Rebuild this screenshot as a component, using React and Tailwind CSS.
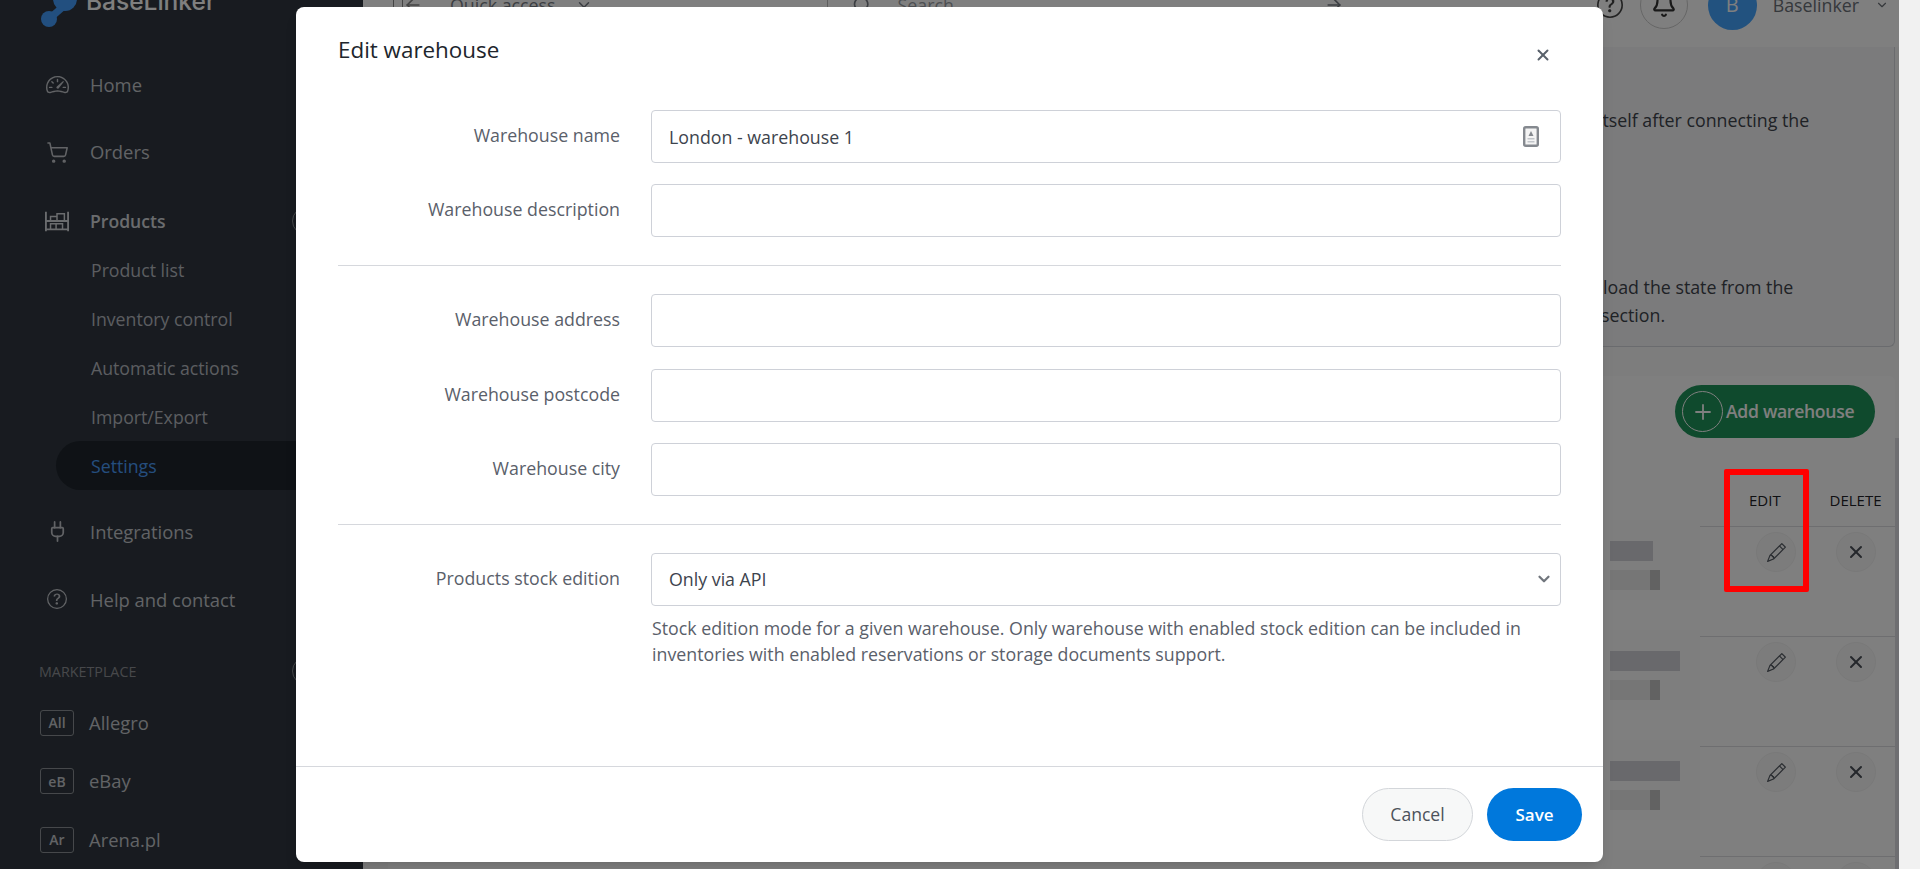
import { Bell, ChevronDown, Search, ArrowRight, ArrowLeft, X, Plus, ShoppingCart, Plug } from 'lucide-react';
import { BsSpeedometer2, BsQuestionCircle, BsPencil } from 'react-icons/bs';

function ShelfIcon() {
  return (
    <svg width="26" height="21" viewBox="0 0 26 21" fill="none" stroke="currentColor" strokeWidth="2">
      <path d="M1 0v21M25 0v21M1 10h24M1 19h24" />
      <path d="M6 10V5h7v5M13 7V2h8v8M6 19v-6h6v6M12 19v-6h7v6" strokeWidth="1.6" />
    </svg>
  );
}

function ContactIcon() {
  return (
    <svg width="16" height="21" viewBox="0 0 16 21">
      <rect x="1.2" y="1.2" width="13.6" height="18.6" rx="1.5" fill="#f4f4f4" stroke="#85898f" strokeWidth="2.4" />
      <path d="M8 5l2.5 5h-5z" fill="#85898f" />
      <rect x="4.5" y="12" width="7" height="1.5" fill="#c2c5ca" />
      <rect x="4.5" y="15" width="7" height="1.5" fill="#c2c5ca" />
    </svg>
  );
}

function MainItem({ icon, label }) {
  return (
    <div className="flex items-center h-[68px] pl-[45px] text-[18.4px] text-[#c4c7cc]">
      <span className="w-[24px] flex justify-center shrink-0">{icon}</span>
      <span className="ml-[21px]">{label}</span>
    </div>
  );
}

function MarketItem({ tag, label }) {
  return (
    <div className="flex items-center h-[58.5px] pl-[40px] text-[18.4px] text-[#c4c7cc]">
      <span className="w-[34px] h-[26px] border border-[#8d9196] rounded-[3px] flex items-center justify-center text-[14px] font-semibold shrink-0">{tag}</span>
      <span className="ml-[15px]">{label}</span>
    </div>
  );
}

function Sidebar() {
  const subItems = ['Product list', 'Inventory control', 'Automatic actions', 'Import/Export'];
  return (
    <aside className="w-[363px] shrink-0 bg-[#303740] flex flex-col">
      <div className="h-[51px] pl-[41px] flex items-start">
        <div className="h-[13px] flex items-end gap-[9px]">
          <svg width="36" height="40" viewBox="0 0 36 40" className="shrink-0 -mb-[14px]">
            <path d="M8 32L24 18" stroke="#449fff" strokeWidth="7" />
            <circle cx="8" cy="32" r="8" fill="#449fff" />
            <circle cx="24" cy="12" r="12" fill="#449fff" />
          </svg>
          <span className="text-[24.5px] leading-none font-medium text-white font-['Inter',sans-serif]">BaseLinker</span>
        </div>
      </div>
      <MainItem icon={<BsSpeedometer2 size={23} />} label="Home" />
      <MainItem icon={<ShoppingCart size={23} strokeWidth={1.6} />} label="Orders" />
      <div className="mt-[11px] h-[49px] flex items-center pl-[45px] text-[17.6px] font-semibold text-[#d5d8dc]">
        <span className="w-[24px] flex justify-center shrink-0"><ShelfIcon /></span>
        <span className="ml-[21px]">Products</span>
        <span className="ml-auto mr-[43px] w-[28px] h-[28px] rounded-full border border-[#8d9196]" />
      </div>
      <div className="flex flex-col">
        {subItems.map((item) => (
          <div key={item} className="h-[49px] flex items-center pl-[91px] text-[17.7px] text-[#b8bbc0]">{item}</div>
        ))}
        <div className="h-[49px] ml-[56px] pl-[35px] flex items-center text-[17.7px] text-[#4a9dfb] bg-[#1e242c] rounded-l-full">Settings</div>
      </div>
      <div className="mt-[7px]">
        <MainItem icon={<Plug size={23} strokeWidth={1.8} />} label="Integrations" />
        <MainItem icon={<BsQuestionCircle size={20} />} label="Help and contact" />
      </div>
      <div className="mt-[28px] h-[20px] pl-[39px] flex items-center text-[14.3px] text-[#8e9196]">
        MARKETPLACE
        <span className="ml-auto mr-[43px] w-[28px] h-[28px] rounded-full border border-[#8d9196]" />
      </div>
      <div className="mt-[12px]">
        <MarketItem tag="All" label="Allegro" />
        <MarketItem tag="eB" label="eBay" />
        <MarketItem tag="Ar" label="Arena.pl" />
      </div>
    </aside>
  );
}

function TopBar() {
  return (
    <div className="h-[47px] bg-[#ffffff] shrink-0">
      <div className="h-[10px] flex items-center text-[17.8px] text-[#777c84]">
        <span className="ml-[30px] w-[33px] flex items-center shrink-0 text-[#888]">
          <span className="w-[10px] h-[24px] border border-[#888] rounded-[2px] shrink-0" />
          <ArrowLeft size={20} />
        </span>
        <span className="ml-[24px]">Quick access</span>
        <ChevronDown className="ml-[19px] shrink-0" size={18} />
        <span className="ml-[234px] w-px h-[30px] bg-[#bbb] shrink-0" />
        <Search className="ml-[24px] shrink-0" size={20} />
        <span className="ml-[26px] text-[#9a9ea5]">Search</span>
        <ArrowRight className="ml-[370px] shrink-0" size={20} />
        <div className="ml-auto flex items-center">
          <BsQuestionCircle size={26} className="text-[#444]" />
          <span className="ml-[17px] w-[48px] h-[48px] shrink-0 rounded-full border border-[#ccc] flex items-center justify-center">
            <Bell size={26} className="text-[#333]" />
          </span>
          <span className="ml-[20px] w-[49px] h-[49px] shrink-0 rounded-full bg-[#44a4ff] text-white text-[20px] flex items-center justify-center">B</span>
          <span className="ml-[16px] text-[#6c7178]">Baselinker</span>
          <ChevronDown className="ml-[16px] mr-[10px] text-[#6c7178]" size={14} />
        </div>
      </div>
    </div>
  );
}

function InfoCard() {
  return (
    <div className="h-[300px] shrink-0 mr-[4px] ml-[25px] bg-[#f6f7f9] border border-[#d5d7dc] border-t-0 rounded-b-[6px] text-[17.8px] text-[#3f444c] whitespace-nowrap">
      <div className="mt-[60px] leading-[26px] ml-[1209px]">itself after connecting the</div>
      <div className="mt-[140px] leading-[28px] ml-[1214px]">load the state from the</div>
      <div className="leading-[28px] ml-[1212px]">section.</div>
    </div>
  );
}

function Mosaic({ w }) {
  return (
    <div className="h-[80px] w-[97px] mt-[-7px] bg-[#fcfcfc] flex flex-col pl-[7px]">
      <div className={`mt-[21px] h-[20px] bg-[#d2d3d8] ${w}`} />
      <div className="mt-[9px] w-[50px] h-[20px] bg-[#ececec] flex justify-end">
        <span className="w-[10px] h-[20px] bg-[#c4c4c4]" />
      </div>
    </div>
  );
}

function WarehouseRow({ w }) {
  return (
    <div className="h-[110px] border-t border-[#dcdde0] grid grid-cols-[1fr_97px_36px_80px_79px]">
      <div />
      <Mosaic w={w} />
      <div />
      <div className="pt-[5px] flex justify-center">
        <span className="w-[40px] h-[40px] rounded-full bg-[#f9f9f9] border border-[#f2f2f2] flex items-center justify-center text-[#555b63]"><BsPencil size={19} /></span>
      </div>
      <div className="pt-[5px] flex justify-center">
        <span className="w-[40px] h-[40px] rounded-full bg-[#f9f9f9] border border-[#f2f2f2] flex items-center justify-center text-[#4a5058]"><X size={20} strokeWidth={2.4} /></span>
      </div>
    </div>
  );
}

function WarehouseCard() {
  return (
    <div className="mt-[29px] mr-[4px] ml-[25px] bg-white rounded-t-[6px] shrink-0 flex flex-col">
      <div className="h-[62px] pt-[9px] pr-[20px] flex justify-end">
        <button className="w-[200px] h-[53px] rounded-full bg-[#1f945a] flex items-center pl-[7px] text-white text-[17.6px] font-semibold tracking-[-0.3px]">
          <span className="w-[41px] h-[41px] rounded-full border border-white flex items-center justify-center"><Plus size={24} strokeWidth={1.8} /></span>
          <span className="ml-[3px]">Add warehouse</span>
        </button>
      </div>
      <div className="-mr-[4px] border-r-[4px] border-[#dcdde2]">
        <div className="h-[88px] grid grid-cols-[1fr_80px_79px] items-end pb-[15px] text-[15px] text-[#1e2126]">
          <div />
          <div className="pl-[13px]">EDIT</div>
          <div className="text-center">DELETE</div>
        </div>
        <WarehouseRow w="w-[43px]" />
        <WarehouseRow w="w-[70px]" />
        <WarehouseRow w="w-[70px]" />
        <WarehouseRow w="w-[70px]" />
      </div>
    </div>
  );
}

function Field({ label, children }) {
  return (
    <div className="grid grid-cols-[282px_910px] gap-x-[31px] items-center">
      <label className="text-right text-[17.8px] text-[#5a606a] -mt-[2px]">{label}</label>
      {children}
    </div>
  );
}

function TextInput({ value = '', icon }) {
  return (
    <div className="relative">
      <input readOnly value={value} className="w-full h-[53px] border border-[#ced1d8] rounded-[4px] px-[17px] text-[17.8px] text-[#3d444d] outline-none" />
      {icon}
    </div>
  );
}

function EditModal() {
  return (
    <div className="absolute left-[296px] top-[7px] w-[1307px] h-[855px] bg-white rounded-[8px] flex flex-col shadow-lg">
      <div className="h-[103px] pl-[42px] pr-[51px] pt-[27px] flex justify-between items-start shrink-0">
        <h2 className="text-[22.4px] leading-[32px] font-medium text-[#20252c]">Edit warehouse</h2>
        <X className="mt-[12px] text-[#59616b]" size={18} strokeWidth={2.6} />
      </div>
      <div className="pl-[42px] flex flex-col">
        <div className="flex flex-col gap-[21px]">
          <Field label="Warehouse name">
            <TextInput value="London - warehouse 1" icon={<span className="absolute right-[22px] top-[16px]"><ContactIcon /></span>} />
          </Field>
          <Field label="Warehouse description"><TextInput /></Field>
        </div>
        <div className="w-[1223px] my-[28px] border-t border-[#d6d8dd]" />
        <div className="flex flex-col gap-[21.5px]">
          <Field label="Warehouse address"><TextInput /></Field>
          <Field label="Warehouse postcode"><TextInput /></Field>
          <Field label="Warehouse city"><TextInput /></Field>
        </div>
        <div className="w-[1223px] my-[28px] border-t border-[#d6d8dd]" />
        <Field label="Products stock edition">
          <div className="relative">
            <select className="w-full h-[53px] border border-[#ced1d8] rounded-[4px] px-[17px] text-[17.8px] text-[#3d444d] bg-white appearance-none outline-none">
              <option>Only via API</option>
            </select>
            <ChevronDown className="absolute right-[8px] top-[17px] text-[#71767d]" size={18} strokeWidth={3} />
          </div>
        </Field>
        <p className="ml-[314px] mt-[9px] w-[905px] text-[17.8px] leading-[26px] text-[#5a606a]">
          Stock edition mode for a given warehouse. Only warehouse with enabled stock edition can be included in inventories with enabled reservations or storage documents support.
        </p>
      </div>
      <div className="mt-auto h-[96px] border-t border-[#d6d8dd] pt-[21px] pr-[21px] flex justify-end gap-[14px] shrink-0">
        <button className="w-[111px] h-[53px] rounded-full bg-[#f7f8f8] border border-[#d3d6da] text-[17.6px] text-[#4c525b]">Cancel</button>
        <button className="w-[95px] h-[53px] rounded-full bg-[#0078dc] text-[17px] font-semibold text-white">Save</button>
      </div>
    </div>
  );
}

export default function App() {
  return (
    <div className="h-[869px] w-[1920px] overflow-hidden flex font-['Open_Sans',sans-serif]">
      <div className="relative w-[1899px] h-full flex overflow-hidden">
        <Sidebar />
        <main className="flex-1 bg-[#fafafa] flex flex-col min-w-0">
          <TopBar />
          <InfoCard />
          <WarehouseCard />
        </main>
        <div className="absolute inset-0 bg-black/50" />
        <EditModal />
        <div className="absolute left-[1724px] top-[469px] w-[85px] h-[123px] border-[6px] border-[#ff0000] rounded-[2px]" />
      </div>
      <div className="flex-1 bg-[#f1f1f1]" />
    </div>
  );
}
